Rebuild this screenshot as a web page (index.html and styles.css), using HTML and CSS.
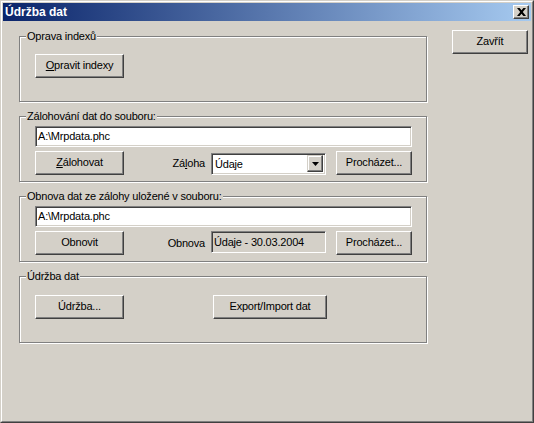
FILE: index.html
```html
<!DOCTYPE html>
<html lang="cs">
<head>
<meta charset="utf-8">
<title>Údržba dat</title>
<link rel="stylesheet" href="styles.css">
</head>
<body>
<div class="window">
  <div class="frame">
    <div class="titlebar">
      <span class="title">Údržba dat</span>
      <span class="close-box">
        <svg width="9" height="8" viewBox="0 0 9 8"><path d="M0 0h2.6l1.9 2.3L6.4 0H9L5.8 4 9 8H6.4L4.5 5.7 2.6 8H0l3.2-4z" fill="#000"/></svg>
      </span>
    </div>
    <div class="client">
      <div class="groups">
        <section class="group g-index">
          <span class="legend">Oprava indexů</span>
          <div class="row">
            <span class="btn btn-main"><u>O</u>pravit indexy</span>
          </div>
        </section>
        <section class="group g-file">
          <span class="legend">Zálohování dat do souboru:</span>
          <div class="field">A:\Mrpdata.phc</div>
          <div class="row">
            <span class="btn btn-main"><u>Z</u>álohovat</span>
            <div class="right-set">
              <span class="label">Zá<u>l</u>oha</span>
              <div class="combo">
                <span class="combo-text">Údaje</span>
                <span class="combo-arrow"><svg width="7" height="4" viewBox="0 0 7 4"><path d="M0 0h7L3.5 4z" fill="#000"/></svg></span>
              </div>
              <span class="btn btn-browse">Procházet...</span>
            </div>
          </div>
        </section>
        <section class="group g-file">
          <span class="legend">Obnova dat ze zálohy uložené v souboru:</span>
          <div class="field">A:\Mrpdata.phc</div>
          <div class="row">
            <span class="btn btn-main">Obnovit</span>
            <div class="right-set">
              <span class="label">Obnova</span>
              <div class="field readonly">Údaje - 30.03.2004</div>
              <span class="btn btn-browse">Procházet...</span>
            </div>
          </div>
        </section>
        <section class="group g-maint">
          <span class="legend">Údržba dat</span>
          <div class="row gap-row">
            <span class="btn btn-main">Údržba...</span>
            <span class="btn btn-export">Export/Import dat</span>
          </div>
        </section>
      </div>
      <span class="btn btn-close">Zavřít</span>
    </div>
  </div>
</div>
</body>
</html>
```

FILE: styles.css
```css
* {
  box-sizing: border-box;
}

html, body {
  margin: 0;
  padding: 0;
  background: #d4d0c8;
}

body {
  font-family: "Liberation Sans", Arial, sans-serif;
  font-size: 11px;
  letter-spacing: -0.2px;
  color: #000;
}

.window {
  width: 534px;
  height: 423px;
  border: 1px solid;
  border-color: #d4d0c8 #404040 #404040 #d4d0c8;
  background: #d4d0c8;
}

.frame {
  height: 100%;
  border: 1px solid;
  border-color: #ffffff #808080 #808080 #ffffff;
  padding: 1px;
  display: flex;
  flex-direction: column;
}

.titlebar {
  height: 18px;
  display: flex;
  align-items: center;
  justify-content: space-between;
  background: linear-gradient(to right, #0a246a, #a6caf0);
  padding: 0 2px 0 2px;
}

.title {
  color: #fff;
  font-weight: bold;
  font-size: 12px;
  letter-spacing: 0;
  line-height: 18px;
}

.close-box {
  width: 16px;
  height: 14px;
  display: flex;
  align-items: center;
  justify-content: center;
  background: #d4d0c8;
  border: 1px solid;
  border-color: #fff #404040 #404040 #fff;
  box-shadow: inset -1px -1px 0 #808080;
}

.close-box svg {
  display: block;
}

.client {
  display: flex;
  align-items: flex-start;
  padding: 9px 0 0 16px;
}

.groups {
  width: 408px;
  margin-top: 6px;
  display: flex;
  flex-direction: column;
  gap: 14px;
}

.group {
  position: relative;
  height: 66px;
  border: 1px solid #808080;
  box-shadow: inset 1px 1px 0 #fff, 1px 1px 0 #fff;
  padding: 0 14px 0 15px;
}

.g-index {
  padding-top: 17px;
}

.g-file {
  padding-top: 9px;
}

.g-maint {
  padding-top: 18px;
  height: 67px;
}

.legend {
  position: absolute;
  top: -7px;
  left: 6px;
  padding: 0 1px;
  line-height: 13px;
  background: #d4d0c8;
  white-space: nowrap;
}

.row {
  display: flex;
  align-items: center;
  height: 24px;
}

.g-file .row {
  margin-top: 4px;
}

.gap-row {
  gap: 89px;
}

.btn {
  display: flex;
  align-items: center;
  justify-content: center;
  height: 24px;
  background: #d4d0c8;
  border: 1px solid;
  border-color: #fff #404040 #404040 #fff;
  box-shadow: inset -1px -1px 0 #808080, inset 1px 1px 0 #d4d0c8;
  line-height: 13px;
  white-space: nowrap;
  padding-bottom: 1px;
}

.btn-main {
  width: 89px;
}

.btn-browse {
  width: 76px;
  margin-left: 10px;
}

.btn-export {
  width: 114px;
}

.btn-close {
  width: 76px;
  margin-left: 25px;
}

.right-set {
  margin-left: auto;
  display: flex;
  align-items: center;
}

.label {
  margin-right: 6px;
  line-height: 13px;
}

.field {
  height: 21px;
  border: 1px solid;
  border-color: #808080 #fff #fff #808080;
  box-shadow: inset 1px 1px 0 #404040, inset -1px -1px 0 #d4d0c8;
  background: #fff;
  padding: 0 0 0 2px;
  line-height: 19px;
  white-space: nowrap;
}

.field.readonly {
  width: 115px;
  background: #d4d0c8;
  height: 22px;
  line-height: 20px;
  margin-top: -2px;
}

.combo {
  width: 115px;
  height: 22px;
  display: flex;
  align-items: center;
  justify-content: space-between;
  border: 1px solid;
  border-color: #808080 #fff #fff #808080;
  box-shadow: inset 1px 1px 0 #404040, inset -1px -1px 0 #d4d0c8;
  background: #fff;
  padding: 2px 2px 2px 3px;
  margin-top: 1px;
}

.combo-text {
  line-height: 16px;
}

.combo-arrow {
  width: 16px;
  height: 17px;
  display: flex;
  align-items: center;
  justify-content: center;
  background: #d4d0c8;
  border: 1px solid;
  border-color: #d4d0c8 #404040 #404040 #d4d0c8;
  box-shadow: inset -1px -1px 0 #808080, inset 1px 1px 0 #fff;
}

.combo-arrow svg {
  display: block;
}

u {
  text-decoration: underline;
  text-underline-offset: 1px;
}
```
